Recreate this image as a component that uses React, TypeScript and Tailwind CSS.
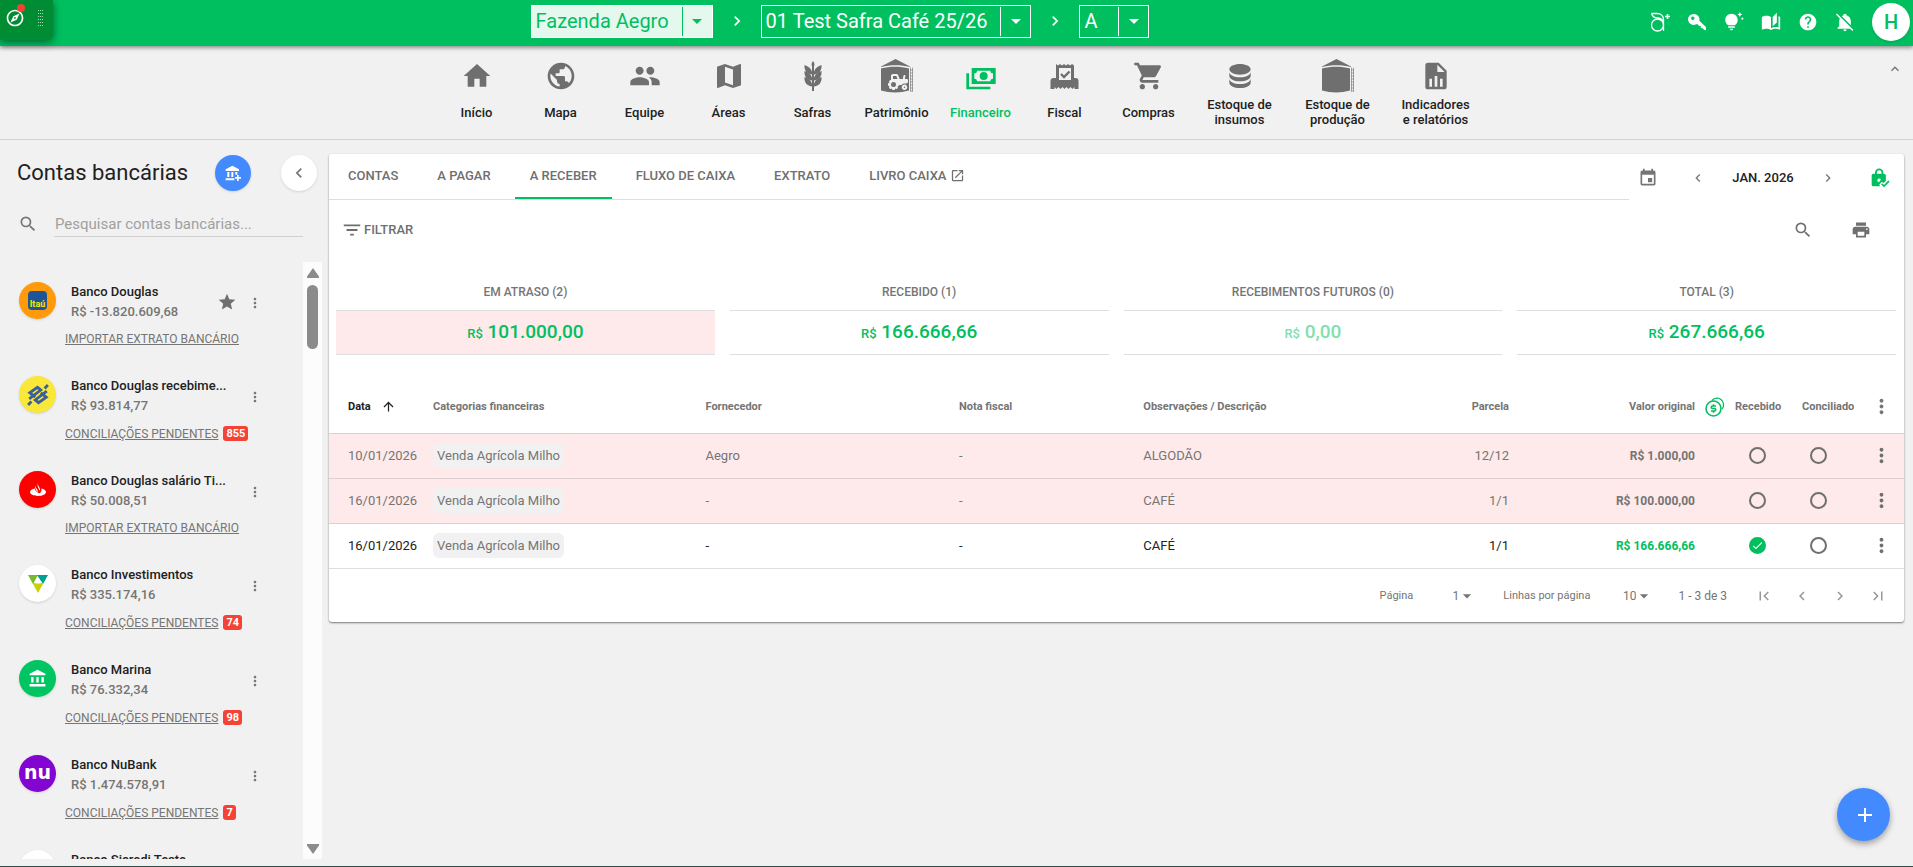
import type { ReactNode } from "react";
import {
  MdAccountBalance,
  MdAdd,
  MdArrowDropDown,
  MdArrowUpward,
  MdAutoStories,
  MdCheck,
  MdChevronLeft,
  MdChevronRight,
  MdEvent,
  MdExpandLess,
  MdFilterList,
  MdFirstPage,
  MdGroup,
  MdHelp,
  MdHome,
  MdLastPage,
  MdMap,
  MdMoreVert,
  MdOpenInNew,
  MdOutlineExplore,
  MdPrint,
  MdPublic,
  MdSearch,
  MdShoppingCart,
  MdStar,
  MdTipsAndUpdates,
} from "react-icons/md";
import { FaTractor } from "react-icons/fa6";

/* ---------- icons ---------- */

const WheatIcon = () => (
  <svg viewBox="0 0 32 32" className="size-8" fill="currentColor">
    <path d="M16 1c-2 2.300-2 4.700 0 7 2-2.300 2-4.700 0-7z" />
    {[5, 11, 17].map((y) => (
      <g key={y} transform={`translate(0 ${y})`}>
        <path d="M7.500 0c-.5 5.500 2.500 9 7.800 9.600C15.300 4.800 12.500 1.500 7.500 0z" />
        <path d="M24.500 0c.5 5.500-2.500 9-7.800 9.600C16.700 4.800 19.500 1.500 24.500 0z" />
      </g>
    ))}
    <path d="M15 6h2v25h-2z" />
  </svg>
);

const SiloIcon = ({ tractor = false }: { tractor?: boolean }) => (
  <svg viewBox="0 0 32 34" className="h-[34px] w-8" fill="currentColor">
    <path d="M0 7.500 14.500 0 29 7.500v.5C20 5.500 9 5.500 0 8z" />
    <path d="M0 9.500c9-2.500 19-2.500 28 0v22c-9 2.500-19 2.500-28 0z" />
    <path
      d="M29.500 8.500v24M31.500 8.500v24M29 11h3M29 14h3M29 17h3M29 20h3M29 23h3M29 26h3M29 29h3M29 32h3"
      stroke="currentColor"
      strokeWidth=".6"
      fill="none"
    />
    {tractor && <FaTractor x={7} y={13} size={20} color="#f1f1f1" />}
  </svg>
);

const CashIcon = () => (
  <svg viewBox="0 0 24 24" className="size-8" fill="currentColor">
    <path d="M5 6h18v12H5V6m9 3a3 3 0 0 1 3 3 3 3 0 0 1-3 3 3 3 0 0 1-3-3 3 3 0 0 1 3-3M9 8a2 2 0 0 1-2 2v4a2 2 0 0 1 2 2h10a2 2 0 0 1 2-2v-4a2 2 0 0 1-2-2H9m-8 2h2v10h16v2H1V10z" />
  </svg>
);

const FiscalIcon = () => (
  <svg viewBox="0 0 32 32" className="size-8" fill="currentColor">
    <path
      fillRule="evenodd"
      d="M7 4l2 1.500L11 4l2 1.500L15 4l2 1.500L19 4l2 1.500L23 4l2 1.500V18h1.500a3 3 0 0 1 3 3v8h-4v-2l-2 2-2-2-2 2-2-2-2 2-2-2-2 2-2-2-2 2-2-2v2h-4v-8a3 3 0 0 1 3-3H7zm3 4v12h12V8z"
    />
    <path d="m12 14 3 3 5.500-5.500" stroke="currentColor" strokeWidth="2.400" fill="none" />
  </svg>
);

const DatabaseIcon = () => (
  <svg viewBox="0 0 24 24" className="size-8" fill="currentColor">
    <path d="M12 3C7.580 3 4 4.790 4 7s3.580 4 8 4 8-1.790 8-4-3.580-4-8-4M4 9v3c0 2.210 3.580 4 8 4s8-1.790 8-4V9c0 2.210-3.580 4-8 4s-8-1.790-8-4m0 5v3c0 2.210 3.580 4 8 4s8-1.790 8-4v-3c0 2.210-3.580 4-8 4s-8-1.790-8-4z" />
  </svg>
);

const FileChartIcon = () => (
  <svg viewBox="0 0 24 24" className="size-8" fill="currentColor">
    <path d="M13 9h5.500L13 3.500V9M6 2h8l6 6v12a2 2 0 0 1-2 2H6a2 2 0 0 1-2-2V4a2 2 0 0 1 2-2m1 18h2v-6H7v6m4 0h2v-8h-2v8m4 0h2v-6h-2v6z" />
  </svg>
);

const AegroPlusIcon = () => (
  <svg viewBox="0 0 20 20" className="size-5" fill="none" stroke="currentColor" strokeWidth="1.300">
    <circle cx="7.500" cy="13" r="6" />
    <path d="M1.500 1.500H7c4 0 6.500 2.500 6.500 6V19M1.500 1.500c1 3 3 4.500 6 4.500 2.500 0 4.500 1 6 3.500" />
    <path d="M17.500 2v5M15 4.500h5" strokeWidth="1.500" />
  </svg>
);

const KeyIcon = () => (
  <svg viewBox="0 0 20 20" className="size-5" fill="currentColor">
    <path
      fillRule="evenodd"
      d="M7.500 2a5.500 5.500 0 1 0 1.700 10.200l1.500 0 1.200 1.500 1.800.3.200 2 1.800.2 1.500 1.800H19v-3l-6.700-6.200A5.500 5.500 0 0 0 7.500 2zM5.800 4.500a1.700 1.700 0 1 1 0 3.400 1.700 1.700 0 0 1 0-3.400z"
    />
  </svg>
);

const BellOffIcon = () => (
  <svg viewBox="0 0 24 24" className="size-5" fill="currentColor">
    <path d="M20.840 22.730 18.110 20H3v-1l2-2v-6c0-1.140.29-2.270.83-3.280L1.110 3l1.280-1.270 19.720 19.730-1.270 1.270M19 15.800V11c0-3.100-2.030-5.830-5-6.710V4a2 2 0 0 0-4 0v.29c-.61.180-1.200.450-1.740.8L19 15.800M12 23a2 2 0 0 0 2-2h-4a2 2 0 0 0 2 2z" />
  </svg>
);

const BankPlusIcon = () => (
  <svg viewBox="0 0 24 24" className="size-4" fill="currentColor">
    <path d="M11 1 1 6.500V9h20V6.500zM3.500 10.500h3V18h-3zm6 0h3V18h-3zm6 0h3v4h-3zM1 20h13v3H1zM18 15h2.500v3H24v2.500h-3.500V24H18v-3.500h-3V18h3z" />
  </svg>
);

const LockCheckIcon = () => (
  <svg viewBox="0 0 24 24" className="size-5" fill="currentColor">
    <path
      fillRule="evenodd"
      d="M16.500 7H16V5.500a5 5 0 0 0-10 0V7H4a2 2 0 0 0-2 2v11a2 2 0 0 0 2 2h8.500l-1.500-2 3-3.500 2.500 1.500 2.500-2.500V9a2 2 0 0 0-2-2zM8.200 7V5.500a2.800 2.800 0 0 1 5.600 0V7zM11 17a2.200 2.200 0 1 1 2.100-2.800L11.500 16z"
    />
    <path d="m14 19 2.800 2.800 6-6" stroke="currentColor" strokeWidth="2" fill="none" />
  </svg>
);

const CoinsIcon = () => (
  <svg viewBox="0 0 20 20" className="size-5 text-[#00bf5f]" fill="none" stroke="currentColor">
    <path d="M7 3.500A6.500 6.500 0 1 1 17 12" strokeWidth="1.300" />
    <circle cx="8.500" cy="11.500" r="7.500" strokeWidth="1.600" />
    <path d="M11 9H7.500a1.200 1.200 0 0 0 0 2.500h2a1.200 1.200 0 0 1 0 2.500H6M8.500 7.300V9m0 5v1.700" strokeWidth="1.600" />
  </svg>
);

const BrasilLogo = () => (
  <svg viewBox="0 0 20 20" className="size-[22px]" fill="none" stroke="#3b5f97" strokeWidth="2.600">
    <path d="M2 13.500 12.500 5.500 9.500 3 2.500 8l5 4" />
    <path d="M18 6.500 7.500 14.500l3 2.500 7-5-5-4" />
    <path d="m1 19 3-3M19 1l-3 3" />
  </svg>
);

const SantanderLogo = () => (
  <svg viewBox="0 0 20 20" className="size-4" fill="#fff">
    <path d="M10 1c-.5 2 .2 3.500 1.200 5 1 1.500 1.600 3 1.300 4.500l-1-.5C11 7.500 8.500 5.500 10 1zM7 4c-.3 1.800.5 3.200 1.500 4.600.9 1.300 1.600 2.500 1.300 3.900l-1.200-.5C8 10 5.500 8 7 4z" />
    <path d="M6 8C3 8.700 0 10.300 0 12.600 0 15.500 4 17.500 10 17.500s10-2 10-4.900c0-2.300-2.800-3.900-5.800-4.600.3 2.600 0 5-2.500 6C8.500 13 6.300 11 6 8z" />
  </svg>
);

const TriangleLogo = () => (
  <svg viewBox="0 0 20 18" className="h-[18px] w-5">
    <path d="M0 0h10L5 9z" fill="#79b928" />
    <path d="M9 0h11l-5 9z" fill="#00a091" />
    <path d="M4.500 8h11L10 18z" fill="#c9d200" />
    <path d="M10 4l2.500 4.500h-5z" fill="#fff" />
  </svg>
);

/* ---------- data ---------- */

type NavItem = { label: string; icon: ReactNode; active?: boolean; wide?: boolean };

const navItems: NavItem[] = [
  { label: "Início", icon: <MdHome size={32} /> },
  { label: "Mapa", icon: <MdPublic size={32} /> },
  { label: "Equipe", icon: <MdGroup size={32} /> },
  { label: "Áreas", icon: <MdMap size={32} /> },
  { label: "Safras", icon: <WheatIcon /> },
  { label: "Patrimônio", icon: <SiloIcon tractor /> },
  { label: "Financeiro", icon: <CashIcon />, active: true },
  { label: "Fiscal", icon: <FiscalIcon /> },
  { label: "Compras", icon: <MdShoppingCart size={32} /> },
  { label: "Estoque de\ninsumos", icon: <DatabaseIcon />, wide: true },
  { label: "Estoque de\nprodução", icon: <SiloIcon />, wide: true },
  { label: "Indicadores\ne relatórios", icon: <FileChartIcon />, wide: true },
];

type Account = {
  name: string;
  balance?: string;
  color: string;
  logo: ReactNode;
  pending?: number;
  starred?: boolean;
};

const accounts: Account[] = [
  {
    name: "Banco Douglas",
    balance: "R$ -13.820.609,68",
    color: "bg-[#ff9a0a]",
    starred: true,
    logo: (
      <span className="flex size-[19px] items-end justify-center rounded bg-[#1d5596] text-[9px] leading-3 font-bold text-[#ffe600]">
        Itaú
      </span>
    ),
  },
  {
    name: "Banco Douglas recebime...",
    balance: "R$ 93.814,77",
    color: "bg-[#f9e83a]",
    pending: 855,
    logo: <BrasilLogo />,
  },
  {
    name: "Banco Douglas salário Ti...",
    balance: "R$ 50.008,51",
    color: "bg-[#ff0000]",
    logo: <SantanderLogo />,
  },
  {
    name: "Banco Investimentos",
    balance: "R$ 335.174,16",
    color: "bg-white",
    pending: 74,
    logo: <TriangleLogo />,
  },
  {
    name: "Banco Marina",
    balance: "R$ 76.332,34",
    color: "bg-[#00c562]",
    pending: 98,
    logo: <MdAccountBalance size={19} color="#fff" />,
  },
  {
    name: "Banco NuBank",
    balance: "R$ 1.474.578,91",
    color: "bg-[#8205d1]",
    pending: 7,
    logo: (
      <span className="pb-1 font-['DejaVu_Sans',sans-serif] text-[19px] leading-6 font-bold text-white">
        nu
      </span>
    ),
  },
  {
    name: "Banco Sicredi Teste",
    color: "bg-white",
    logo: (
      <svg viewBox="0 0 20 20" className="size-5" fill="#5fc13c">
        <circle cx="10" cy="3" r="3" />
        <path d="M2 8h16l-8 12z" />
      </svg>
    ),
  },
];

const tabs = ["CONTAS", "A PAGAR", "A RECEBER", "FLUXO DE CAIXA", "EXTRATO"];

const summary = [
  { label: "EM ATRASO (2)", value: "101.000,00", style: "bg-[#feeaea] text-[#00bf5f]" },
  { label: "RECEBIDO (1)", value: "166.666,66", style: "text-[#00bf5f]" },
  { label: "RECEBIMENTOS FUTUROS (0)", value: "0,00", style: "text-[#80dfaf]" },
  { label: "TOTAL (3)", value: "267.666,66", style: "text-[#00bf5f]" },
];

const rows = [
  { id: 1, date: "10/01/2026", supplier: "Aegro", note: "ALGODÃO", part: "12/12", value: "R$ 1.000,00", paid: false },
  { id: 2, date: "16/01/2026", supplier: "-", note: "CAFÉ", part: "1/1", value: "R$ 100.000,00", paid: false },
  { id: 3, date: "16/01/2026", supplier: "-", note: "CAFÉ", part: "1/1", value: "R$ 166.666,66", paid: true },
];

/* ---------- pieces ---------- */

const SplitSelector = ({ label, light = false }: { label: string; light?: boolean }) => (
  <div
    className={`flex h-[33px] border border-white text-xl ${
      light ? "bg-[#e5f8ee] text-[#00bf5f]" : "text-white"
    }`}
  >
    <button className="min-w-[38px] pr-[13px] pl-1 text-left whitespace-nowrap">{label}</button>
    <button
      aria-label={`Trocar ${label}`}
      className="my-px flex w-[30px] items-center justify-center border-l border-current"
    >
      <MdArrowDropDown size={24} />
    </button>
  </div>
);

const Header = () => (
  <header className="relative z-10 flex h-[46px] shrink-0 bg-[#00bf5f] text-white shadow-[0_2px_4px_rgba(0,0,0,0.4)]">
    <div className="flex h-10 w-[53px] justify-between rounded-br-md bg-[#008c32] pt-2 pr-[9px] pl-[5px] shadow-[0_2px_8px_rgba(0,0,0,0.5)]">
      <button aria-label="Explorar" className="relative size-5">
        <MdOutlineExplore size={20} />
        <span className="absolute -top-1 right-0 size-2 rounded-full bg-[#f44336]" />
      </button>
      <svg viewBox="0 0 6 16" className="mt-0.5 h-4 w-1.5" fill="#a5d9b8">
        {[0, 3, 6, 9, 12, 15].map((y) => (
          <g key={y}>
            <rect x="0" y={y} width="1" height="1" />
            <rect x="2" y={y} width="1" height="1" />
            <rect x="4" y={y} width="1" height="1" />
          </g>
        ))}
      </svg>
    </div>
    <div className="flex flex-1 items-center justify-center pb-1">
      <SplitSelector label="Fazenda Aegro" light />
      <MdChevronRight size={20} className="mx-3.5" />
      <SplitSelector label="01 Test Safra Café 25/26" />
      <MdChevronRight size={20} className="mx-3.5" />
      <SplitSelector label="A" />
    </div>
    <div className="flex w-[286px] items-center justify-end gap-[17px] pr-[3px] pb-0.5">
      <button aria-label="Convidar"><AegroPlusIcon /></button>
      <button aria-label="Chaves"><KeyIcon /></button>
      <button aria-label="Novidades"><MdTipsAndUpdates size={20} /></button>
      <button aria-label="Manual"><MdAutoStories size={20} /></button>
      <button aria-label="Ajuda"><MdHelp size={20} /></button>
      <button aria-label="Notificações"><BellOffIcon /></button>
      <button
        aria-label="Perfil"
        className="size-[38px] rounded-full bg-white text-xl font-medium text-[#00bf5f] shadow"
      >
        H
      </button>
    </div>
  </header>
);

const Nav = () => (
  <nav className="relative flex h-[94px] shrink-0 justify-center border-b border-[#d3d3d3] pt-3 pl-1.5">
    {navItems.map((item) => (
      <a
        key={item.label}
        href="#"
        className={`flex flex-col items-center px-1 ${item.wide ? "w-[98px]" : "w-[84px]"} ${
          item.active ? "text-[#00bf5f]" : "text-[#6f6f6f]"
        }`}
      >
        <span className="flex h-9 items-center">{item.icon}</span>
        <span
          className={`flex h-9 items-center text-center text-[13px] leading-[15px] font-medium whitespace-pre-line ${
            item.active ? "text-[#00bf5f]" : "text-[#212121]"
          }`}
        >
          {item.label}
        </span>
      </a>
    ))}
    <button aria-label="Recolher menu" className="absolute top-[15px] right-2.5 text-[#757575]">
      <MdExpandLess size={16} />
    </button>
  </nav>
);

const AccountItem = ({ account }: { account: Account }) => (
  <li>
    <div className="flex h-10">
      <span
        className={`flex size-[37px] shrink-0 items-center justify-center overflow-hidden rounded-full shadow ${account.color}`}
      >
        {account.logo}
      </span>
      <div className="ml-[15px] w-[160px] text-[13px] leading-5 font-medium whitespace-nowrap">
        <p className="text-[#212121]">{account.name}</p>
        <p className="text-[#757575]">{account.balance}</p>
      </div>
      {account.starred && <MdStar size={20} className="mt-2.5 -ml-3.5 text-[#6f6f6f]" />}
      <button aria-label={`Opções de ${account.name}`} className="ml-auto pt-0.5 text-[#757575]">
        <MdMoreVert size={16} />
      </button>
    </div>
    {account.balance && (
      <div className="flex items-center pt-2 pb-7 pl-[46px]">
        <a href="#" className="text-xs leading-[18px] whitespace-nowrap text-[#757575] underline">
          {account.pending ? "CONCILIAÇÕES PENDENTES" : "IMPORTAR EXTRATO BANCÁRIO"}
        </a>
        {account.pending && (
          <span className="my-0.5 ml-[5px] rounded-[3px] bg-[#f44336] px-[3px] text-[11px] leading-[15px] font-bold text-white">
            {account.pending}
          </span>
        )}
      </div>
    )}
  </li>
);

const Sidebar = () => (
  <aside className="flex w-[322px] shrink-0 flex-col pb-[7px]">
    <div className="flex items-center pt-[15px] pr-[5px] pl-[17px]">
      <h1 className="flex-1 text-[22px] leading-9 text-[#212121]">Contas bancárias</h1>
      <button
        aria-label="Adicionar conta"
        className="mr-[30px] flex size-9 items-center justify-center rounded-full bg-[#448aff] text-white shadow"
      >
        <BankPlusIcon />
      </button>
      <button
        aria-label="Recolher contas"
        className="flex size-9 items-center justify-center rounded-full bg-white text-[#757575] shadow"
      >
        <MdChevronLeft size={20} />
      </button>
    </div>
    <label className="mt-5 flex items-center gap-4 pr-[19px] pl-[18px]">
      <MdSearch size={20} className="text-[#757575]" />
      <input
        type="text"
        aria-label="Pesquisar contas bancárias"
        placeholder="Pesquisar contas bancárias..."
        className="h-[26px] min-w-0 flex-1 border-b border-[#d0d0d0] bg-transparent px-px text-[15px] outline-none placeholder:text-[#a0a0a0]"
      />
    </label>
    <div className="mt-[25px] flex min-h-0 flex-1">
      <ul className="flex-1 overflow-hidden pt-5 pr-10 pl-[19px]">
        {accounts.map((account) => (
          <AccountItem key={account.name} account={account} />
        ))}
      </ul>
      <div className="flex w-[19px] flex-col items-center bg-[#fcfcfc] pt-1.5 pb-[5px]">
        <svg viewBox="0 0 12 10" className="h-2.5 w-3" fill="#8b8b8b">
          <path d="M6 0 12 8.500V10H0V8.500z" />
        </svg>
        <span className="mt-[7px] h-16 w-[11px] rounded-full bg-[#8b8b8b]" />
        <svg viewBox="0 0 12 10" className="mt-auto h-2.5 w-3" fill="#8b8b8b">
          <path d="M6 10 12 1.500V0H0v1.500z" />
        </svg>
      </div>
    </div>
  </aside>
);

const CircleCheck = ({ label, checked = false }: { label: string; checked?: boolean }) => (
  <span className="relative flex size-[17px]">
    <input
      type="checkbox"
      aria-label={label}
      defaultChecked={checked}
      className="peer size-[17px] appearance-none rounded-full border-2 border-[#6f6f6f] checked:border-[#00bf5f] checked:bg-[#00bf5f]"
    />
    <MdCheck
      size={13}
      className="pointer-events-none absolute inset-0 m-auto hidden text-white peer-checked:block"
    />
  </span>
);

const Toolbar = () => (
  <div className="flex">
    <div className="flex flex-1 gap-[9px] border-b border-[#dedede] pl-1">
      {tabs.map((tab) => (
        <button
          key={tab}
          className={`h-[45px] border-b-2 px-[15px] text-[13px] font-medium text-[#6f6f6f] ${
            tab === "A RECEBER" ? "border-[#00bf5f]" : "border-transparent"
          }`}
        >
          {tab}
        </button>
      ))}
      <a
        href="#"
        className="flex h-[45px] items-center gap-1 border-b-2 border-transparent px-[15px] text-[13px] font-medium text-[#6f6f6f]"
      >
        LIVRO CAIXA <MdOpenInNew size={15} />
      </a>
    </div>
    <div className="flex w-[275px] items-center pt-0.5 pr-3.5 pl-[9px] text-[#757575]">
      <button aria-label="Calendário"><MdEvent size={20} /></button>
      <button aria-label="Mês anterior" className="ml-8"><MdChevronLeft size={16} /></button>
      <span className="flex-1 text-center text-[13px] font-medium text-[#212121]">JAN. 2026</span>
      <button aria-label="Próximo mês" className="mr-[34px]"><MdChevronRight size={16} /></button>
      <button aria-label="Período fechado" className="text-[#00bf5f]"><LockCheckIcon /></button>
    </div>
  </div>
);

const EntriesTable = () => (
  <table className="mt-[26px] w-full table-fixed text-left text-[13px] text-[#757575]">
    <colgroup>
      <col className="w-[104px]" />
      <col className="w-[17.3%]" />
      <col className="w-[16.1%]" />
      <col className="w-[11.7%]" />
      <col />
      <col className="w-[100px]" />
      <col className="w-[186px]" />
      <col className="w-10" />
      <col className="w-[67px]" />
      <col className="w-16" />
      <col className="w-[38px]" />
    </colgroup>
    <thead>
      <tr className="h-[52px] border-b border-[#d9d0d0] text-[11px] font-bold whitespace-nowrap">
        <th className="pl-[19px] text-[#212121]">
          <span className="flex items-center gap-2.5">
            Data <MdArrowUpward size={15} />
          </span>
        </th>
        <th>Categorias financeiras</th>
        <th>Fornecedor</th>
        <th>Nota fiscal</th>
        <th>Observações / Descrição</th>
        <th className="text-right">Parcela</th>
        <th className="text-right">Valor original</th>
        <th aria-label="Moeda">
          <span className="flex justify-center"><CoinsIcon /></span>
        </th>
        <th>Recebido</th>
        <th>Conciliado</th>
        <th>
          <button aria-label="Opções da tabela" className="ml-1 flex"><MdMoreVert size={23} /></button>
        </th>
      </tr>
    </thead>
    <tbody>
      {rows.map((row) => (
        <tr
          key={row.id}
          className={`h-[45px] border-b ${
            row.paid ? "border-[#dedede] text-[#212121]" : "border-[#e0cfd0] bg-[#feeaea]"
          }`}
        >
          <td className="pl-[19px]">{row.date}</td>
          <td>
            <span className="inline-block rounded-md bg-[#f1f1f1] px-1 leading-[25px] text-[#757575]">
              Venda Agrícola Milho
            </span>
          </td>
          <td>{row.supplier}</td>
          <td>-</td>
          <td>{row.note}</td>
          <td className="text-right">{row.part}</td>
          <td className={`text-right text-xs font-bold ${row.paid ? "text-[#00bf5f]" : "text-[#757575]"}`}>
            {row.value}
          </td>
          <td />
          <td className="pl-3.5">
            <CircleCheck label={`Recebido ${row.date}`} checked={row.paid} />
          </td>
          <td className="pl-2">
            <CircleCheck label={`Conciliado ${row.date}`} />
          </td>
          <td className="text-[#6f6f6f]">
            <button aria-label={`Opções ${row.date}`} className="ml-1 flex"><MdMoreVert size={23} /></button>
          </td>
        </tr>
      ))}
    </tbody>
  </table>
);

const PageSelect = ({ label, value }: { label: string; value: string }) => (
  <label className="flex items-center">
    {label}
    <span className="relative ml-[26px] flex items-center">
      <select
        defaultValue={value}
        className="w-[38px] appearance-none bg-transparent pr-[18px] text-right text-xs outline-none"
      >
        <option>{value}</option>
      </select>
      <MdArrowDropDown size={20} className="pointer-events-none absolute right-0" />
    </span>
  </label>
);

const Pagination = () => (
  <div className="flex h-[53px] items-center justify-end pt-0.5 pr-[17px] text-[11px] text-[#757575]">
    <PageSelect label="Página" value="1" />
    <span className="w-[26px]" />
    <PageSelect label="Linhas por página" value="10" />
    <span className="mr-7 ml-6 text-xs">1 - 3 de 3</span>
    <div className="flex gap-5 text-[#979797]">
      <button aria-label="Primeira página"><MdFirstPage size={18} /></button>
      <button aria-label="Página anterior"><MdChevronLeft size={18} /></button>
      <button aria-label="Próxima página"><MdChevronRight size={18} /></button>
      <button aria-label="Última página"><MdLastPage size={18} /></button>
    </div>
  </div>
);

const App = () => {
  return (
    <div className="flex h-screen flex-col overflow-hidden border-b border-[#2f4f4a] bg-[#f1f1f1] font-[Roboto,sans-serif]">
      <Header />
      <Nav />
      <div className="flex min-h-0 flex-1">
        <Sidebar />
        <main className="min-w-0 flex-1 pt-3.5 pr-[9px] pl-[7px]">
          <section className="rounded-[3px] bg-white shadow-[0_1px_2px_rgba(0,0,0,0.5)]">
            <Toolbar />
            <div className="flex h-[60px] items-center pr-[33px] pl-3 text-[#6f6f6f]">
              <button className="flex items-center gap-px text-[13px] font-medium">
                <MdFilterList size={22} />
                FILTRAR
              </button>
              <button aria-label="Buscar" className="ml-auto"><MdSearch size={20} /></button>
              <button aria-label="Imprimir" className="ml-[38px]"><MdPrint size={20} /></button>
            </div>
            <div className="grid grid-cols-4 gap-[15px] pt-3.5 pr-2 pl-[7px]">
              {summary.map((card) => (
                <div key={card.label} className="text-center font-medium">
                  <p className="h-9 text-xs leading-9 text-[#757575]">{card.label}</p>
                  <p className={`h-[45px] border-y border-[#dedede] text-[19px] leading-[42px] ${card.style}`}>
                    <span className="text-[13px]">R$</span> {card.value}
                  </p>
                </div>
              ))}
            </div>
            <EntriesTable />
            <Pagination />
          </section>
        </main>
      </div>
      <button
        aria-label="Adicionar"
        className="fixed right-[23px] bottom-[26px] flex size-[53px] items-center justify-center rounded-full bg-[#448aff] pl-0.5 text-white shadow-[0_3px_6px_rgba(0,0,0,0.35)]"
      >
        <MdAdd size={24} />
      </button>
    </div>
  );
};

export default App;
